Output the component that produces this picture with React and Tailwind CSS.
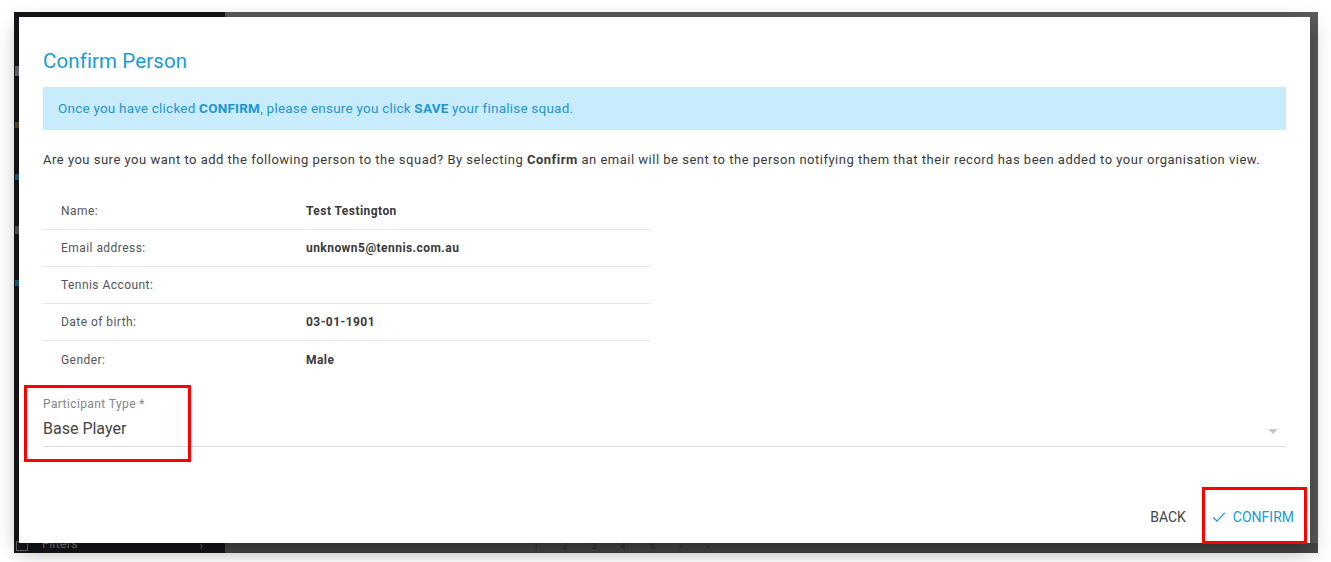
import React from 'react';

const rows = [
  { label: 'Name:', value: 'Test Testington' },
  { label: 'Email address:', value: 'unknown5@tennis.com.au' },
  { label: 'Tennis Account:', value: '' },
  { label: 'Date of birth:', value: '03-01-1901' },
  { label: 'Gender:', value: 'Male' },
];

const App = () => {
  return (
    <div className="w-[1331px] h-[562px] bg-white overflow-hidden" style={{ fontFamily: 'Roboto, "Liberation Sans", sans-serif' }}>
      <div className="relative ml-[14px] mt-[12px] w-[1304px] h-[541px] flex">
        {/* background app behind the dialog */}
        <div className="w-[211px] h-full bg-[#15161b] flex flex-col justify-between">
          <div className="flex flex-col gap-[46px] pt-[54px] pl-[1px]">
            <div className="w-[5px] h-[10px] bg-[#6b6e75]" />
            <div className="w-[5px] h-[6px] bg-[#5c4a2a]" />
            <div className="w-[5px] h-[6px] bg-[#1f5f86]" />
            <div className="w-[5px] h-[8px] bg-[#555]" />
            <div className="w-[5px] h-[6px] bg-[#1f5f86]" />
          </div>
          <div className="flex items-center justify-between pl-[2px] pr-[22px] h-[14px]">
            <div className="w-[12px] h-[10px] border border-[#666]" />
            <span className="text-[13px] text-[#777] -mt-[4px] ml-[14px] flex-1">Filters</span>
            <span className="text-[#666] text-[12px]">›</span>
          </div>
        </div>
        <div className="flex-1 h-full flex flex-col">
          <div className="flex-1 bg-[#5a5a5a]" />
          <div className="h-[10px] bg-[#474747] flex items-start justify-center gap-[24px] text-[9px] leading-[6px] text-[#1e2a36] pr-[300px]">
            <span>1</span><span>2</span><span>3</span><span>4</span><span>5</span><span>›</span><span>»</span>
          </div>
        </div>

        {/* dialog */}
        <div className="absolute left-[5px] top-[5px] w-[1291px] h-[526px] bg-white shadow-[0_8px_20px_rgba(0,0,0,0.35)] flex flex-col">
          <div className="px-[24px] pt-[32px] flex-1">
            <h2 className="text-[20.5px] leading-[24px] text-[#1b9ad6] font-normal tracking-[0.1px]">Confirm Person</h2>
            <div className="mt-[14px] h-[43px] bg-[#c9ecfd] flex items-center px-[15px] text-[13.5px] text-[#2196cf] tracking-[0.22px]">
              <span>Once you have clicked <b className="font-bold">CONFIRM</b>, please ensure you click <b className="font-bold">SAVE</b> your finalise squad.</span>
            </div>
            <p className="mt-[22px] text-[13px] leading-[16px] text-[#3a3a3a] tracking-[0.5px]">
              Are you sure you want to add the following person to the squad? By selecting <b className="font-bold">Confirm</b> an email will be sent to the person notifying them that their record has been added to your organisation view.
            </p>
            <div className="mt-[25px] w-[607px]">
              {rows.map((r, i) => (
                <div key={r.label} className={`flex items-center h-[37px] text-[12px] tracking-[0.45px] ${i < rows.length - 1 ? 'border-b border-[#e6e6e6]' : ''}`}>
                  <span className="w-[263px] pl-[18px] text-[#555]">{r.label}</span>
                  <span className="font-bold text-[#3a3a3a]">{r.value}</span>
                </div>
              ))}
            </div>
            <div className="relative mt-[18px] border-b border-[#dcdcdc] pb-[6px]">
              <div className="text-[12px] text-[#858585] tracking-[0.4px] leading-[16px]">Participant Type *</div>
              <div className="mt-[6px] text-[16px] leading-[22px] text-[#444]">Base Player</div>
              <div className="absolute right-[8px] top-[33px] w-0 h-0 border-l-[5px] border-r-[5px] border-t-[5px] border-l-transparent border-r-transparent border-t-[#c8c8c8]" />
            </div>
          </div>
          <div className="flex items-center justify-end gap-[10px] pr-[8px] pb-[11px]">
            <button className="h-[30px] px-[8px] text-[14px] text-[#444]">BACK</button>
            <button className="h-[30px] px-[8px] text-[14px] text-[#1b9ad6] flex items-center gap-[7px]">
              <svg width="14" height="14" viewBox="0 0 24 24" fill="none" stroke="#1b9ad6" strokeWidth="2.2"><path d="M2 12.5l6.5 6.5L22 5" /></svg>
              CONFIRM
            </button>
          </div>
        </div>

        {/* annotation boxes */}
        <div className="absolute left-[10px] top-[373px] w-[167px] h-[77px] border-[3px] border-[#ff0000]" />
        <div className="absolute left-[1188px] top-[475px] w-[105px] h-[57px] border-[3px] border-[#ff0000]" />
      </div>
    </div>
  );
};

export default App;
